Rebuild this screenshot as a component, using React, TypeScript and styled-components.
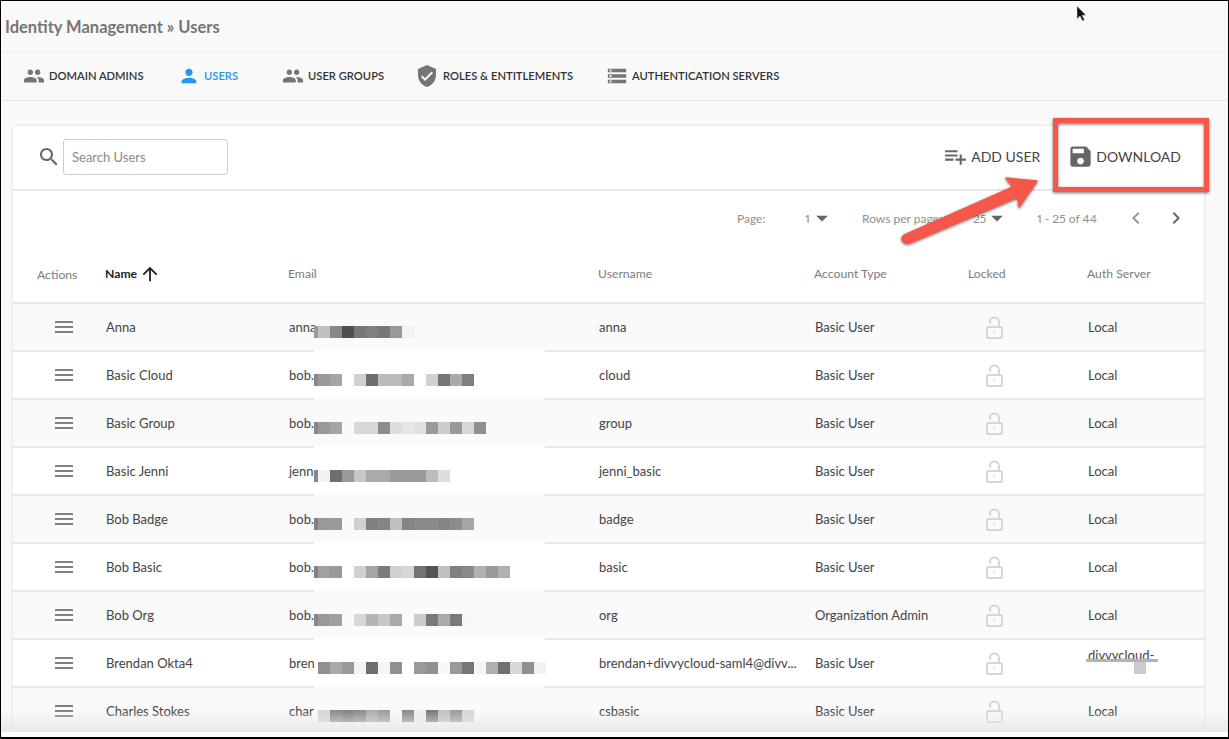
import React from "react";
import styled, { createGlobalStyle } from "styled-components";

const Global = createGlobalStyle`
  html, body { margin: 0; padding: 0; background: #fff; }
  body { font-family: Lato, "Open Sans", sans-serif; }
`;

const COLUMNS = "92px 183px 310px 216px 154px 119px 117px";

const Frame = styled.div`
  position: relative;
  box-sizing: border-box;
  width: 1229px;
  height: 739px;
  border: 1px solid #000;
  border-bottom-width: 2px;
  background: #fff;
  overflow: hidden;
`;
const Viewport = styled.div`
  position: relative;
  height: 731px;
  background: #f9f9f9;
  overflow: hidden;
`;
const Header = styled.header`
  box-sizing: border-box;
  height: 51px;
  padding: 1px 0 0 4px;
  display: flex;
  align-items: center;
  border-bottom: 1px solid #eeeeee;
  font-size: 16.5px;
  font-weight: 700;
  color: #757575;
`;
const TabBar = styled.nav`
  box-sizing: border-box;
  height: 49px;
  padding: 0 0 1px 22px;
  display: flex;
  align-items: center;
  border-bottom: 1px solid #e9e9e9;
`;
const Tab = styled.div<{ $width: number; $active?: boolean }>`
  width: ${(p) => p.$width}px;
  flex: none;
  display: flex;
  align-items: center;
  gap: 4px;
  font-size: 11.2px;
  font-weight: 600;
  text-transform: uppercase;
  white-space: nowrap;
  color: ${(p) => (p.$active ? "#2196f3" : "#333333")};
  svg { flex: none; fill: ${(p) => (p.$active ? "#2196f3" : "#757575")}; }
`;
const Content = styled.main`
  padding: 25px 0 0 12px;
`;
const Card = styled.section`
  width: 1191px;
  background: #fff;
  box-shadow: 0 0 3px rgba(0, 0, 0, 0.14);
`;
const Toolbar = styled.div`
  box-sizing: border-box;
  height: 65px;
  padding: 0 23px 2px 24px;
  display: flex;
  align-items: center;
  border-bottom: 2px solid #e6e6e6;
`;
const SearchInput = styled.input`
  box-sizing: border-box;
  width: 165px;
  height: 36px;
  margin-left: 2px;
  padding: 0 8px;
  border: 1px solid #cccccc;
  border-radius: 3px;
  background: #fff;
  font: 400 13px Lato, sans-serif;
  outline: none;
  &::placeholder { color: #8a8a8a; opacity: 1; }
`;
const Spacer = styled.div`
  flex: 1;
`;
const ToolButton = styled.div<{ $gap: number; $left?: number }>`
  display: flex;
  align-items: center;
  gap: ${(p) => p.$gap}px;
  margin-left: ${(p) => p.$left ?? 0}px;
  font-size: 14px;
  color: #444444;
  svg { flex: none; fill: #666666; }
`;
const Pagination = styled.div`
  box-sizing: border-box;
  height: 60px;
  padding: 0 16px 6px 0;
  display: flex;
  align-items: center;
  justify-content: flex-end;
  font-size: 12px;
  color: #8f8f8f;
`;
const PagerItem = styled.div<{ $width: number }>`
  width: ${(p) => p.$width}px;
  flex: none;
  display: flex;
  align-items: center;
  white-space: nowrap;
  font-variant-numeric: proportional-nums;
  svg { flex: none; }
`;
const HeadRow = styled.div`
  box-sizing: border-box;
  height: 53px;
  padding-bottom: 7px;
  display: grid;
  grid-template-columns: ${COLUMNS};
  align-items: center;
  border-bottom: 2px solid #e6e6e6;
  font-size: 12.2px;
  color: #7c7c7c;
`;
const ActionsHead = styled.div`
  padding: 2px 0 0 24px;
`;
const NameHead = styled.div`
  display: flex;
  align-items: center;
  gap: 2px;
  font-weight: 700;
  color: #222222;
  svg { fill: #222222; margin-top: 2px; }
`;
const Row = styled.div<{ $shade: boolean }>`
  position: relative;
  box-sizing: border-box;
  height: 48px;
  display: grid;
  grid-template-columns: ${COLUMNS};
  align-items: center;
  border-bottom: 2px solid #e9e9e9;
  background: ${(p) => (p.$shade ? "#fafafa" : "#ffffff")};
  font-size: 13px;
  color: #444444;
`;
const MenuCell = styled.div`
  display: flex;
  padding-left: 39px;
  svg { fill: #808080; }
`;
const Cell = styled.div`
  min-width: 0;
  padding-left: 1px;
  white-space: nowrap;
`;
const LockCell = styled.div`
  display: flex;
  padding-left: 17px;
  svg { fill: none; stroke: #d6d6d6; stroke-width: 2; }
`;
const WrappedCell = styled(Cell)`
  position: relative;
  align-self: stretch;
  padding-top: 7px;
  line-height: 16px;
`;
/* Redaction pasted over the table by the author of the screenshot */
const Patch = styled.div<{ $shade: boolean; $wide: boolean }>`
  position: absolute;
  left: 301px;
  top: -2px;
  width: ${(p) => (p.$wide ? "231px" : "100px")};
  height: ${(p) => (p.$wide ? "48px" : "0")};
  background: ${(p) => (p.$shade ? "#fafafa" : "#ffffff")};
`;
const Pixels = styled.div`
  position: absolute;
  left: 0;
  top: 24px;
  display: flex;
  height: 12px;
`;
const Pixel = styled.span<{ $tone: string; $lead?: boolean }>`
  flex: none;
  width: ${(p) => (p.$lead ? 4 : 12)}px;
  background: ${(p) => p.$tone || "transparent"};
`;
const Strike = styled.div`
  position: absolute;
  left: -1px;
  top: 19px;
  width: 72px;
  height: 3px;
  background: #b4b4b4;
`;
const StrikeBlock = styled.div`
  position: absolute;
  left: 47px;
  top: 22px;
  width: 12px;
  height: 12px;
  background: #cccccc;
`;
const BottomFade = styled.div`
  position: absolute;
  left: 0;
  right: 0;
  bottom: 0;
  height: 22px;
  background: linear-gradient(rgba(232, 232, 232, 0), rgba(232, 232, 232, 0.95));
  pointer-events: none;
`;
const Callout = styled.div`
  position: absolute;
  left: 1052px;
  top: 117px;
  box-sizing: border-box;
  width: 156px;
  height: 74px;
  border: 5px solid #f5574b;
  filter: drop-shadow(0 1px 1.5px rgba(0, 0, 0, 0.55));
`;
const Arrow = styled.svg`
  position: absolute;
  left: 890px;
  top: 165px;
  filter: drop-shadow(0 1.5px 1.5px rgba(0, 0, 0, 0.55));
`;
const Cursor = styled.svg`
  position: absolute;
  left: 1072px;
  top: 3px;
`;

type IconProps = { d: string; size?: number };
const Icon = ({ d, size = 24 }: IconProps) => (
  <svg width={size} height={size} viewBox="0 0 24 24">
    <path d={d} />
  </svg>
);

const P = {
  people: "M16 11c1.66 0 2.99-1.34 2.99-3S17.66 5 16 5c-1.66 0-3 1.34-3 3s1.34 3 3 3zm-8 0c1.66 0 2.99-1.34 2.99-3S9.66 5 8 5C6.34 5 5 6.34 5 8s1.34 3 3 3zm0 2c-2.33 0-7 1.17-7 3.5V19h14v-2.5c0-2.33-4.67-3.5-7-3.5zm8 0c-.29 0-.62.02-.97.05 1.16.84 1.97 1.97 1.97 3.45V19h6v-2.5c0-2.33-4.67-3.5-7-3.5z",
  person: "M12 12c2.21 0 4-1.79 4-4s-1.79-4-4-4-4 1.79-4 4 1.79 4 4 4zm0 2c-2.67 0-8 1.34-8 4v2h16v-2c0-2.66-5.33-4-8-4z",
  shield: "M12 1L3 5v6c0 5.55 3.84 10.74 9 12 5.16-1.26 9-6.45 9-12V5l-9-4zm-2 16l-4-4 1.41-1.41L10 14.17l6.59-6.59L18 9l-8 8z",
  storage: "M2 20h20v-4H2v4zm2-3h2v2H4v-2zM2 4v4h20V4H2zm4 3H4V5h2v2zm-4 7h20v-4H2v4zm2-3h2v2H4v-2z",
  save: "M17 3H5c-1.11 0-2 .9-2 2v14c0 1.1.89 2 2 2h14c1.1 0 2-.9 2-2V7l-4-4zm-5 16c-1.66 0-3-1.34-3-3s1.34-3 3-3 3 1.34 3 3-1.34 3-3 3zm3-10H5V5h10v4z",
  add: "M14 10H2v2h12v-2zm0-4H2v2h12V6zm4 8v-4h-2v4h-4v2h4v4h2v-4h4v-2h-4zM2 16h8v-2H2v2z",
  search: "M15.5 14h-.79l-.28-.27C15.41 12.59 16 11.11 16 9.5 16 5.91 13.09 3 9.5 3S3 5.91 3 9.5 5.91 16 9.5 16c1.61 0 3.09-.59 4.23-1.57l.27.28v.79l5 4.99L20.49 19l-4.99-5zm-6 0C7.01 14 5 11.99 5 9.5S7.01 5 9.5 5 14 7.01 14 9.5 11.99 14 9.5 14z",
  menu: "M3 18h18v-2H3v2zm0-5h18v-2H3v2zm0-7v2h18V6H3z",
  up: "M4 12l1.41 1.41L11 7.83V20h2V7.83l5.58 5.59L20 12l-8-8-8 8z",
  left: "M15.41 7.41L14 6l-6 6 6 6 1.41-1.41L10.83 12z",
  right: "M10 6L8.59 7.41 13.17 12l-4.58 4.59L10 18l6-6z",
  caret: "M7 10l5 5 5-5z",
};

const Fill = styled.span<{ $color: string; $left?: number }>`
  display: flex;
  margin-left: ${(p) => p.$left ?? 0}px;
  svg { fill: ${(p) => p.$color}; }
`;

const Lock = () => (
  <svg width="18" height="23" viewBox="0 0 18 23">
    <rect x="2" y="11" width="15" height="11" rx="1.5" />
    <path d="M5 7.5V6a4.5 4.5 0 0 1 9 0v5" />
    <circle cx="9.5" cy="16.5" r="0.9" fill="#d6d6d6" stroke="none" />
  </svg>
);

type Person = {
  name: string;
  email: string;
  username: string;
  type: string;
  lead: string;
  tones: string[];
  wide?: boolean;
  auth?: string;
};

const people: Person[] = [
  { name: "Anna", email: "anna", username: "anna", type: "Basic User", lead: "#999999", wide: false,
    tones: ["#c0c0c0", "#888888", "#4f4f4f", "#777777", "#808080", "#777777", "#999999", "#f2f2f2"] },
  { name: "Basic Cloud", email: "bob.", username: "cloud", type: "Basic User", lead: "#888888",
    tones: ["#999999", "#a5a5a5", "", "#d0d0d0", "#6e6e6e", "#bbbbbb", "#bbbbbb", "#aaaaaa", "", "#d0d0d0", "#777777", "#aaaaaa", "#808080"] },
  { name: "Basic Group", email: "bob.", username: "group", type: "Basic User", lead: "#888888",
    tones: ["#999999", "#a5a5a5", "", "#d8d8d8", "#d8d8d8", "#8c8c8c", "#dddddd", "#e6e6e6", "#e0e0e0", "#9a9a9a", "#cccccc", "#999999", "#d8d8d8", "#909090"] },
  { name: "Basic Jenni", email: "jenn", username: "jenni_basic", type: "Basic User", lead: "#888888",
    tones: ["#f2f2f2", "#6e6e6e", "#999999", "#c8c8c8", "#aaaaaa", "#aaaaaa", "#999999", "#999999", "#999999", "#bbbbbb", "#dddddd"] },
  { name: "Bob Badge", email: "bob.", username: "badge", type: "Basic User", lead: "#808080",
    tones: ["#999999", "#9a9a9a", "", "#d0d0d0", "#808080", "#858585", "#c0c0c0", "#858585", "#8a8a8a", "#8a8a8a", "#858585", "#8c8c8c", "#a5a5a5", "#f7f7f7"] },
  { name: "Bob Basic", email: "bob.", username: "basic", type: "Basic User", lead: "#808080",
    tones: ["#a0a0a0", "#999999", "", "#d0d0d0", "#a5a5a5", "#7c7c7c", "#d0d0d0", "#d6d6d6", "#737373", "#555555", "#c0c0c0", "#808080", "#8a8a8a", "#b0b0b0", "#999999", "#b0b0b0"] },
  { name: "Bob Org", email: "bob.", username: "org", type: "Organization Admin", lead: "#888888",
    tones: ["#999999", "#a0a0a0", "", "#d8d8d8", "#b5b5b5", "#c8c8c8", "#aaaaaa", "", "#cccccc", "#7a7a7a", "#aaaaaa", "#7a7a7a", "#f7f7f7"] },
  { name: "Brendan Okta4", email: "bren", username: "brendan+divvycloud-saml4@divv...", type: "Basic User", lead: "", auth: "divvycloud-",
    tones: ["#909090", "#aaaaaa", "#999999", "#f2f2f2", "#707070", "#f5f5f5", "#909090", "", "#999999", "#909090", "#f7f7f7", "#999999", "#777777", "#f5f5f5", "#b0b0b0", "#707070", "#d8d8d8", "#909090", "#f2f2f2"] },
  { name: "Charles Stokes", email: "char", username: "csbasic", type: "Basic User", lead: "",
    tones: ["#d5d5d5", "#8a8a8a", "#808080", "#8a8a8a", "#aaaaaa", "#999999", "", "#888888", "#f0f0f0", "#777777", "#c0c0c0", "#999999", "#d5d5d5"] },
];

export default function App() {
  return (
    <Frame>
      <Global />
      <Viewport>
        <Header>Identity Management » Users</Header>
        <TabBar>
          <Tab $width={155}><Icon d={P.people} size={22} />Domain Admins</Tab>
          <Tab $width={104} $active><Icon d={P.person} size={22} />Users</Tab>
          <Tab $width={133}><Icon d={P.people} size={22} />User Groups</Tab>
          <Tab $width={191}><Icon d={P.shield} size={24} />Roles &amp; Entitlements</Tab>
          <Tab $width={190}><Icon d={P.storage} size={22} />Authentication Servers</Tab>
        </TabBar>
        <Content>
          <Card>
            <Toolbar>
              <Fill $color="#666666"><Icon d={P.search} size={24} /></Fill>
              <SearchInput placeholder="Search Users" />
              <Spacer />
              <ToolButton $gap={3}><Icon d={P.add} size={25} />ADD USER</ToolButton>
              <ToolButton $gap={2} $left={27}><Icon d={P.save} size={27} />DOWNLOAD</ToolButton>
            </Toolbar>
            <Pagination>
              <PagerItem $width={68}>Page:</PagerItem>
              <PagerItem $width={57}>1<Fill $color="#666666" $left={-2}><Icon d={P.caret} size={28} /></Fill></PagerItem>
              <PagerItem $width={111}>Rows per page:</PagerItem>
              <PagerItem $width={64}>25<Fill $color="#666666" $left={-3}><Icon d={P.caret} size={28} /></Fill></PagerItem>
              <PagerItem $width={87}>1 - 25 of 44</PagerItem>
              <PagerItem $width={40}><Fill $color="#999999"><Icon d={P.left} size={24} /></Fill></PagerItem>
              <PagerItem $width={24}><Fill $color="#666666"><Icon d={P.right} size={24} /></Fill></PagerItem>
            </Pagination>
            <HeadRow>
              <ActionsHead>Actions</ActionsHead>
              <NameHead>Name<Icon d={P.up} size={22} /></NameHead>
              <div>Email</div>
              <div>Username</div>
              <div>Account Type</div>
              <div>Locked</div>
              <div>Auth Server</div>
            </HeadRow>
            {people.map((p, i) => {
              const shade = i % 2 === 0;
              return (
                <Row key={p.name} $shade={shade}>
                  <MenuCell><Icon d={P.menu} /></MenuCell>
                  <Cell>{p.name}</Cell>
                  <Cell>{p.email}</Cell>
                  <Cell>{p.username}</Cell>
                  <Cell>{p.type}</Cell>
                  <LockCell><Lock /></LockCell>
                  {p.auth ? (
                    <WrappedCell>
                      {p.auth}
                      <Strike />
                      <StrikeBlock />
                    </WrappedCell>
                  ) : (
                    <Cell>Local</Cell>
                  )}
                  <Patch $shade={shade} $wide={p.wide !== false}>
                    <Pixels>
                      <Pixel $lead $tone={p.lead} />
                      {p.tones.map((t, k) => <Pixel key={k} $tone={t} />)}
                    </Pixels>
                  </Patch>
                </Row>
              );
            })}
          </Card>
        </Content>
        <BottomFade />
      </Viewport>
      <Callout />
      <Arrow width="160" height="90" viewBox="890 165 160 90">
        <path
          d="M904.5 233.5 L1012 186 L1005 177 L1036 180 L1018 206 L1017 196 L908.500 242 Q902 243 901 238 Q901 235 904.500 233.500 Z"
          fill="#f5574b"
          stroke="#f5574b"
          strokeWidth="1.5"
          strokeLinejoin="round"
        />
      </Arrow>
      <Cursor width="16" height="22" viewBox="0 0 16 22">
        <path d="M4 2v13l3-3 2.500 5 2-1-2.300-4.800h3.800z" fill="#111" stroke="#ddd" strokeWidth="0.5" />
      </Cursor>
    </Frame>
  );
}
